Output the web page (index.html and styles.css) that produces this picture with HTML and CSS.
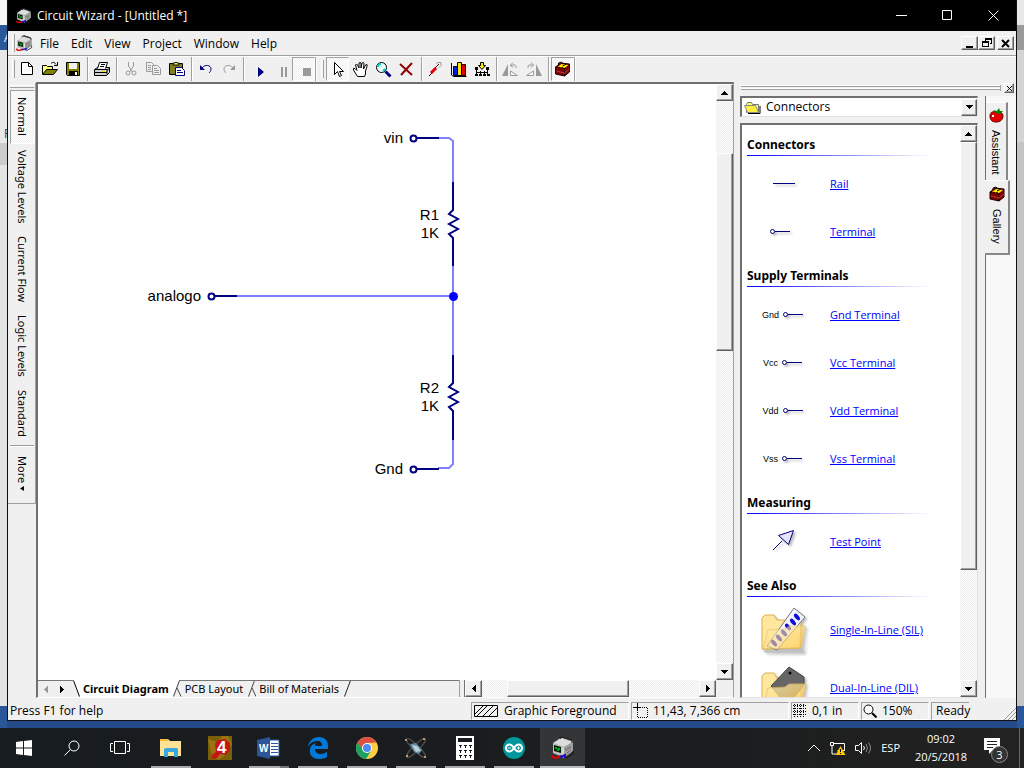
FILE: index.html
```html
<!DOCTYPE html>
<html lang="en">
<head>
    <meta charset="UTF-8">
    <meta name="viewport" content="width=device-width, initial-scale=1.0">
    <title>Circuit Wizard - [Untitled *]</title>
    <link rel="stylesheet" href="styles.css">
</head>
<body>
    <svg class="defs" aria-hidden="true">
        <symbol id="meter" viewBox="0 0 24 24">
            <path d="M2 8l7-6 4-1 9 4v10l-9 7-11-5z" fill="#8a8a8a"/>
            <path d="M2 7l8-5 12 4-9 5z" fill="#dcdcdc"/>
            <path d="M2 7l11 4v10L2 17z" fill="#c0c0c0"/>
            <path d="M13 11l9-5v9l-9 6z" fill="#a0a0a0"/>
            <path d="M9 3l2-2 10 3v3M8 2l3-1 9 3" fill="none" stroke="#222"/>
            <path d="M3 9l7 2v6l-7-2z" fill="#001a00"/>
            <path d="M4 13l1-2 2 4 1-3 1 2" fill="none" stroke="#00d030"/>
            <path d="M12 12v7" stroke="#eee"/>
            <path d="M15 12v3M17 11v3M19 10v3M16 17l4-3" stroke="#666"/>
            <path d="M1 19c0 4 5 3 9 1" fill="none" stroke="#e00000" stroke-width="2"/>
            <path d="M9 21l5-2v3" fill="none" stroke="#1010d0" stroke-width="2"/>
            <path d="M15 22l7-4v-3" fill="none" stroke="#111"/>
        </symbol>
        <symbol id="toolbox" viewBox="0 0 16 16">
            <path d="M1 6l5-4 9 1v8l-5 4-9-2z" fill="#800000" stroke="#200000"/>
            <path d="M3 6l4-3 7 1-4 3z" fill="#ffee00"/>
            <path d="M4 4V2l3-1 2 2M8 5l4-2" fill="none" stroke="#000"/>
            <path d="M1 6l9 1v8" fill="none" stroke="#000" stroke-dasharray="2 1"/>
            <path d="M2 10l8 2 5-4" fill="none" stroke="#b04040"/>
        </symbol>
        <symbol id="term" viewBox="0 0 22 8">
            <path d="M5 3.500h15" stroke="#000080"/>
            <circle cx="2.500" cy="3.500" r="2" fill="#fff" stroke="#000080"/>
        </symbol>
        <symbol id="up" viewBox="0 0 7 4"><path d="M3 0h1v1h1v1h1v1h1v1H0V3h1V2h1V1h1z"/></symbol>
        <symbol id="down" viewBox="0 0 7 4"><path d="M0 0h7v1H6v1H5v1H4v1H3V3H2V2H1V1H0z"/></symbol>
        <symbol id="left" viewBox="0 0 4 7"><path d="M0 3h1V2h1V1h1V0h1v7H3V6H2V5H1V4H0z"/></symbol>
        <symbol id="right" viewBox="0 0 4 7"><path d="M4 3H3V2H2V1H1V0H0v7h1V6h1V5h1V4h1z"/></symbol>
    </svg>

    <div class="desktop">
        <div class="side side-left"><span class="side-a">A</span><span class="side-f">F</span></div>
        <div class="window">
            <header class="titlebar">
                <svg width="16" height="16"><use href="#meter"/></svg>
                <h1>Circuit Wizard - [Untitled *]</h1>
                <div class="caption">
                    <button aria-label="Minimize"><svg width="11" height="11"><path d="M0 5.500h11" stroke="#fff"/></svg></button>
                    <button aria-label="Maximize"><svg width="11" height="11"><path d="M.5.5h9v9h-9z" fill="none" stroke="#fff"/></svg></button>
                    <button aria-label="Close"><svg width="11" height="11"><path d="M.5.5l10 10M10.500.5l-10 10" stroke="#fff"/></svg></button>
                </div>
            </header>

            <nav class="menubar">
                <span class="grip"></span>
                <svg width="17" height="17"><use href="#meter"/></svg>
                <button>File</button>
                <button>Edit</button>
                <button>View</button>
                <button>Project</button>
                <button>Window</button>
                <button>Help</button>
                <div class="mdi">
                    <button aria-label="Minimize document" class="raised"><svg width="10" height="9"><path d="M1 7h7v2H1z"/></svg></button>
                    <button aria-label="Restore document" class="raised"><svg width="10" height="10" class="crisp"><path d="M3 0h7v6H8V5h1V2H4v1H3zM0 3h7v6H0zM1 5v3h5V5z" fill-rule="evenodd"/></svg></button>
                    <button aria-label="Close document" class="raised mdi-close"><svg width="10" height="9"><path d="M1 1l7 7M8 1L1 8" stroke="#000" stroke-width="2"/></svg></button>
                </div>
            </nav>

            <div class="toolbar">
                <span class="grip"></span>
                <button aria-label="New"><svg width="16" height="16"><path d="M2.500 1.500h7l4 4v8h-11z" fill="#fff" stroke="#000"/><path d="M9.500 1.500v4h4" fill="none" stroke="#000"/></svg></button>
                <button aria-label="Open"><svg width="18" height="16"><path d="M1.500 13V4.500h4l1 1h5V8" fill="#ffff80" stroke="#000"/><path d="M1.500 13.500l4-5h11l-4 5z" fill="#808000" stroke="#000"/><path d="M10 2.500c2-2 4-1 5 1M16.500 1v3.500H13" fill="none" stroke="#000"/></svg></button>
                <button aria-label="Save"><svg width="16" height="16"><path d="M1.500 1.500h13v13h-12l-1-1z" fill="#808000" stroke="#000"/><path d="M4 2h8v6H4z" fill="#f0f0f0"/><path d="M4 10h9v4H4z"/><path d="M10 11h2v3h-2z" fill="#fff"/></svg></button>
                <span class="sep"></span>
                <button aria-label="Print"><svg width="18" height="16"><path d="M1.500 8.500l3-2h12v5l-3 3h-12z" fill="#d0d0d0" stroke="#000"/><path d="M4.500 7.500l2-6h8l-2 6" fill="#fff" stroke="#000"/><path d="M8 3.500h4M7 5.500h4" stroke="#000"/><path d="M2 8.500h12v5M14 9l3-2M2 11.500h12" fill="none" stroke="#000"/><path d="M9 10.500h3" stroke="#f5e000"/></svg></button>
                <span class="sep"></span>
                <button aria-label="Cut"><svg width="16" height="16" fill="none" stroke="#999"><path d="M5.500 1v4l4 6M10.500 1v4l-4 6"/><circle cx="5" cy="12" r="2"/><circle cx="11" cy="12" r="2"/></svg></button>
                <button aria-label="Copy"><svg width="17" height="16" fill="#f0f0f0" stroke="#999"><path d="M1.500 1.500h5l3 3v6h-8z"/><path d="M7.500 4.500h5l3 3v6h-8z"/><path d="M3 4.500h3M3 6.500h3M3 8.500h3M9 7.500h3M9 9.500h5M9 11.500h5"/></svg></button>
                <button aria-label="Paste"><svg width="17" height="16"><path d="M1.500 2.500h13v11h-13z" fill="#808020" stroke="#000"/><path d="M5 4V2h2l1-1 1 1h2v2z" fill="#ffff70" stroke="#000"/><path d="M7.500 6.500h6l3 3v5h-9z" fill="#fff" stroke="#000080"/><path d="M9 9.500h4M9 11.500h6" stroke="#000080"/></svg></button>
                <span class="sep"></span>
                <button aria-label="Undo"><svg width="14" height="12"><path d="M1 2v5h5z" fill="#000080"/><path d="M3 5c3-4 9-3 9 1 0 2-1 3-2 4" fill="none" stroke="#000080"/></svg></button>
                <button aria-label="Redo"><svg width="14" height="12"><path d="M13 2v5H8z" fill="#999"/><path d="M11 5C8 1 2 2 2 6c0 2 1 3 2 4" fill="none" stroke="#999"/></svg></button>
                <span class="sep"></span>
                <button aria-label="Run" class="run"><svg width="6" height="10"><path d="M0 0l6 5-6 5z" fill="#000080"/></svg></button>
                <button aria-label="Pause" class="run"><svg width="6" height="10"><path d="M0 0h2v10H0zM4 0h2v10H4z" fill="#999"/></svg></button>
                <button aria-label="Stop" class="run pressed"><svg width="8" height="8"><path d="M0 0h8v8H0z" fill="#999"/></svg></button>
                <span class="band-end"></span>
                <span class="grip"></span>
                <button aria-label="Select" class="pressed"><svg width="14" height="17"><path d="M3.500 1.500v12l3-3 2 5 2-1-2-4h4z" fill="#fff" stroke="#000"/></svg></button>
                <button aria-label="Pan"><svg width="18" height="17"><path d="M5.500 15.500L1.500 9V7.500h1.500l2 2L3.500 4l1-1 1 1L7 7V2l1-.5 1 .5v5l1-5 1.500-.5.5 1L11.500 8l2-4 1.500-.5v2L13.500 10v3l-1 2.500z" fill="#fff" stroke="#000"/></svg></button>
                <button aria-label="Zoom"><svg width="17" height="17"><circle cx="6.500" cy="6.500" r="5" fill="#e8ffff" stroke="#000"/><path d="M3 6c0-2 1-3 3-3M8 10l2-2" stroke="#00d0d0" stroke-width="2" fill="none"/><path d="M10.500 10.500l5 5" stroke="#000080" stroke-width="3"/></svg></button>
                <button aria-label="Delete"><svg width="15" height="15"><path d="M1 2l12 11M13 1L2 13" stroke="#900000" stroke-width="2" fill="none"/></svg></button>
                <span class="sep"></span>
                <button aria-label="Probe"><svg width="15" height="16"><path d="M1 15l3-3" stroke="#000"/><path d="M3 12l5-5" stroke="#e00000" stroke-width="3"/><path d="M7 7l4-4" stroke="#500000"/><path d="M8 2.500l2-1h3v3l-2 2" fill="none" stroke="#999"/></svg></button>
                <button aria-label="Graph"><svg width="18" height="17"><path d="M1.500 2v12l2 1.500h13" fill="none" stroke="#000"/><path d="M3.500 5.500h4v9h-4z" fill="#0020e0" stroke="#000"/><path d="M7.500 1.500h4v13h-4z" fill="#ffe800" stroke="#000"/><path d="M11.500 3.500h4v11h-4z" fill="#e00000" stroke="#000"/></svg></button>
                <button aria-label="Convert to PCB"><svg width="16" height="17"><path d="M6.500 1.500h3v3h2l-3.500 4-3.500-4h2z" fill="#ffe800" stroke="#000"/><path d="M2.500 7v8M13.500 7v8M6.500 10v5M10.500 10v5M2 11.500h12" stroke="#000"/><path d="M1 6h3v3H1zM12 6h3v3h-3zM1 13h3v2H1zM5 13h3v2H5zM9 13h3v2H9zM13 13h3v2h-3z"/></svg></button>
                <span class="sep"></span>
                <button aria-label="Rotate left"><svg width="17" height="15"><path d="M6 2v12H0z" fill="#999"/><path d="M8.500 9v4.500h7z" fill="#fff" stroke="#999"/><path d="M9 4.500V3h3c2 0 2 1 2 3M11 .5L8.500 3 11 5.500" fill="none" stroke="#999"/></svg></button>
                <button aria-label="Rotate right"><svg width="17" height="15"><path d="M11 2v12h6z" fill="#999"/><path d="M8.500 9v4.500h-7z" fill="#fff" stroke="#999"/><path d="M3 6c0-2 0-3 2-3h3M6 .5L8.500 3 6 5.500" fill="none" stroke="#999"/></svg></button>
                <span class="sep"></span>
                <button aria-label="Gallery" class="pressed"><svg width="17" height="16"><use href="#toolbox"/></svg></button>
                <span class="band-end"></span>
            </div>

            <main class="workspace">
                <div class="modes">
                    <span class="grip-h"></span>
                    <button class="pressed">Normal</button>
                    <button>Voltage Levels</button>
                    <button>Current Flow</button>
                    <button>Logic Levels</button>
                    <button>Standard</button>
                    <span class="modes-sep"></span>
                    <button>More <svg width="4" height="5"><path d="M4 0v5L0 2.500z"/></svg></button>
                </div>

                <section class="editor">
                    <div class="sheet">
                        <svg class="circuit" role="img" aria-label="Voltage divider circuit">
                            <g fill="none" stroke="#8080ff" stroke-width="2">
                                <path d="M400 54h11l4 3v42M415 182v90M415 356v24l-4 4h-11M198 212h217"/>
                            </g>
                            <g fill="none" stroke="#000080" stroke-width="2">
                                <path d="M378 54h23M176 212h23M378 385h23"/>
                                <path d="M415 98v28l-4 4 9 5-9 5 9 5-9 5 4 4v28"/>
                                <path d="M415 271v28l-4 4 9 5-9 5 9 5-9 5 4 4v29"/>
                            </g>
                            <g fill="#fff" stroke="#000080" stroke-width="2">
                                <circle cx="375.500" cy="54.500" r="3"/>
                                <circle cx="173.500" cy="212.500" r="3"/>
                                <circle cx="375.500" cy="385.500" r="3"/>
                            </g>
                            <circle cx="415.500" cy="212.500" r="4.500" fill="#0000ff"/>
                            <g text-anchor="end">
                                <text x="365" y="59">vin</text>
                                <text x="163" y="217">analogo</text>
                                <text x="365" y="390">Gnd</text>
                                <text x="401" y="136">R1</text>
                                <text x="401" y="154">1K</text>
                                <text x="401" y="309">R2</text>
                                <text x="401" y="327">1K</text>
                            </g>
                        </svg>
                        <div class="vscroll">
                            <button class="raised" aria-label="Scroll up"><svg width="7" height="4"><use href="#up"/></svg></button>
                            <span class="track track-52"></span>
                            <span class="thumb thumb-197"></span>
                            <span class="track track-314"></span>
                            <button class="raised" aria-label="Scroll down"><svg width="7" height="4"><use href="#down"/></svg></button>
                        </div>
                    </div>
                    <div class="sheet-bar">
                        <div class="tabs">
                            <button class="tab-nav" aria-label="Previous tab"><svg width="4" height="7" fill="#999"><use href="#left"/></svg></button>
                            <button class="tab-nav" aria-label="Next tab"><svg width="4" height="7"><use href="#right"/></svg></button>
                            <svg width="10" height="17"><path d="M4 0l6 17V0z" fill="#fff"/><path d="M3.500.5L9.500 16.500" stroke="#000"/><path d="M0 .5h4" stroke="#777"/></svg>
                            <button class="tab active">Circuit Diagram</button>
                            <svg width="10" height="17"><path d="M0 0h7L1 17H0z" fill="#fff"/><path d="M7.500.5L1.500 16.500M5 8l4 8.500" stroke="#444"/><path d="M7 .5h3" stroke="#777"/></svg>
                            <button class="tab">PCB Layout</button>
                            <svg width="10" height="17"><path d="M8.500.5L2.500 16.500M6 8l4 8.500" stroke="#444"/><path d="M0 .5h10" stroke="#777"/></svg>
                            <button class="tab">Bill of Materials</button>
                            <svg width="10" height="17"><path d="M8.500.5L2.500 16.500" stroke="#222"/><path d="M0 .5h10" stroke="#777"/></svg>
                            <span class="tabs-rest"></span>
                        </div>
                        <div class="hscroll">
                            <button class="raised" aria-label="Scroll left"><svg width="4" height="7"><use href="#left"/></svg></button>
                            <span class="track track-25"></span>
                            <span class="thumb thumb-121"></span>
                            <span class="track track-71"></span>
                            <button class="raised" aria-label="Scroll right"><svg width="4" height="7"><use href="#right"/></svg></button>
                        </div>
                        <span class="corner"></span>
                    </div>
                </section>

                <aside class="dock">
                    <div class="dock-title">
                        <span class="dock-grip"></span>
                        <button class="raised" aria-label="Close gallery"><svg width="7" height="7"><path d="M1 1l5 5M6 1L1 6" stroke="#000"/></svg></button>
                    </div>
                    <div class="dock-body">
                        <div class="gallery">
                            <div class="combo">
                                <svg width="17" height="14"><path d="M2.500 12.500h12v-8h-6l-1-2h-4l-1 2z" fill="#ffff70" stroke="#777"/><path d="M.5 5.500h11l3 7h-11z" fill="#fff040" stroke="#888"/><path d="M4 13.500h12V6" fill="none" stroke="#000"/></svg>
                                <select aria-label="Gallery group"><option>Connectors</option></select>
                                <span class="raised combo-arrow"><svg width="7" height="4"><use href="#down"/></svg></span>
                            </div>
                            <div class="listing">
                                <div class="groups">
                                    <h2>Connectors</h2>
                                    <div class="part"><span class="pic"><svg width="22" height="8"><path d="M0 3.500h22" stroke="#000080"/></svg></span><a href="#">Rail</a></div>
                                    <div class="part"><span class="pic pic-term"><svg width="22" height="8"><use href="#term"/></svg></span><a href="#">Terminal</a></div>
                                    <h2>Supply Terminals</h2>
                                    <div class="part"><span class="pic"><b>Gnd</b><svg width="22" height="8"><use href="#term"/></svg></span><a href="#">Gnd Terminal</a></div>
                                    <div class="part"><span class="pic"><b>Vcc</b><svg width="22" height="8"><use href="#term"/></svg></span><a href="#">Vcc Terminal</a></div>
                                    <div class="part"><span class="pic"><b>Vdd</b><svg width="22" height="8"><use href="#term"/></svg></span><a href="#">Vdd Terminal</a></div>
                                    <div class="part"><span class="pic"><b>Vss</b><svg width="22" height="8"><use href="#term"/></svg></span><a href="#">Vss Terminal</a></div>
                                    <h2>Measuring</h2>
                                    <div class="part"><span class="pic"><svg width="24" height="26"><path d="M1 21l9-9" stroke="#000080"/><path d="M6.500 6.500l15-5-5 14z" fill="#e4e4ff" stroke="#000080"/></svg></span><a href="#">Test Point</a></div>
                                    <h2>See Also</h2>
                                    <div class="part part-folder">
                                        <span class="pic"><svg width="48" height="48" viewBox="0 0 48 48">
                                            <defs>
                                                <linearGradient id="fold" x1="0" y1="0" x2="1" y2="1"><stop offset="0" stop-color="#fff3c0"/><stop offset="1" stop-color="#ffc445"/></linearGradient>
                                            </defs>
                                            <path d="M3 45l40-2 3-20-2 24H6z" fill="#bbb" opacity=".7"/>
                                            <path d="M2 43V12l3-3h9l3 5h22l2 2-1 26z" fill="#ffe7a0" stroke="#dcae50"/>
                                            <path d="M7 40L34 2l11 9-28 33z" fill="#f4f4ff" stroke="#777"/>
                                            <g fill="#1010d8"><ellipse cx="37" cy="11" rx="2" ry="4" transform="rotate(-40 37 11)"/><ellipse cx="33" cy="16" rx="2" ry="4" transform="rotate(-40 33 16)"/><ellipse cx="28" cy="21" rx="2" ry="4" transform="rotate(-40 28 21)"/><ellipse cx="24" cy="27" rx="2" ry="4" transform="rotate(-40 24 27)"/><ellipse cx="19" cy="32" rx="2" ry="4" transform="rotate(-40 19 32)"/><ellipse cx="14" cy="37" rx="2" ry="4" transform="rotate(-40 14 37)"/></g>
                                            <path d="M3 43l5-19 17-1 4-3h17l-5 22z" fill="url(#fold)" stroke="#e5bd60" opacity=".6"/>
                                        </svg></span><a href="#">Single-In-Line (SIL)</a>
                                    </div>
                                    <div class="part part-folder">
                                        <span class="pic"><svg width="48" height="48" viewBox="0 0 48 48">
                                            <path d="M3 45l40-2 3-20-2 24H6z" fill="#bbb" opacity=".7"/>
                                            <path d="M2 43V12l3-3h9l3 5h22l2 2-1 26z" fill="#ffe7a0" stroke="#dcae50"/>
                                            <path d="M11 22L29 3l15 10v8L27 42z" fill="#666" stroke="#444"/>
                                            <circle cx="30" cy="9" r="1.500"/>
                                            <path d="M3 43l5-19 17-1 4-3h17l-5 22z" fill="url(#fold)" stroke="#e5bd60" opacity=".75"/>
                                        </svg></span><a href="#">Dual-In-Line (DIL)</a>
                                    </div>
                                </div>
                                <div class="vscroll">
                                    <button class="raised" aria-label="Scroll gallery up"><svg width="7" height="4"><use href="#up"/></svg></button>
                                    <span class="thumb thumb-428"></span>
                                    <span class="track track-111"></span>
                                    <button class="raised" aria-label="Scroll gallery down"><svg width="7" height="4"><use href="#down"/></svg></button>
                                </div>
                            </div>
                        </div>
                        <div class="dock-tabs">
                            <button class="dock-tab"><svg width="15" height="15"><path d="M1 8c0-4 3-5 6-4 4-1 7 1 7 4 0 4-3 6-7 6s-6-2-6-6z" fill="#e00000" stroke="#700000"/><path d="M7 5L4 2l4 1 2-3 1 3h3l-3 3z" fill="#008000"/><path d="M3 7h2v2H3z" fill="#fff"/></svg>Assistant</button>
                            <button class="dock-tab current"><svg width="16" height="16"><use href="#toolbox"/></svg>Gallery</button>
                        </div>
                    </div>
                </aside>
            </main>

            <footer class="statusbar">
                <span class="hint">Press F1 for help</span>
                <span class="pane pane-wide pane-layer"><svg width="24" height="12"><path d="M.5.5h23v11H.5zM1 9l8-8M3 11L13 1M9 11L19 1M15 11l8-8" fill="none" stroke="#000"/></svg>Graphic Foreground</span>
                <span class="pane pane-wide pane-pos"><svg width="16" height="16" class="crisp"><path d="M4.500 0v8M0 4.500h8" stroke="#000"/><path d="M5 4.500h10M5 14.500h10M4.500 5v10M14.500 5v10" stroke="#000" stroke-dasharray="1 1"/></svg>11,43, 7,366 cm</span>
                <span class="pane"><svg width="14" height="14" class="crisp"><path d="M1.500 0v14M4.500 0v14M7.500 0v14M10.500 0v14M0 1.500h14M0 4.500h14M0 7.500h14M0 10.500h14" stroke="#000" stroke-dasharray="1 1"/></svg>0,1 in</span>
                <span class="pane"><svg width="14" height="14"><circle cx="5.500" cy="5.500" r="4.500" fill="#fff" stroke="#000"/><path d="M9 9l4.500 4.500" stroke="#000" stroke-width="2"/></svg>150%</span>
                <span class="pane pane-ready">Ready</span>
                <svg class="size-grip" width="12" height="12" stroke="#999"><path d="M0 12L12 0M4 12l8-8M8 12l4-4"/></svg>
            </footer>
        </div>
        <div class="side side-right"></div>
    </div>

    <nav class="taskbar">
        <button class="task plain" aria-label="Start"><svg width="16" height="16" fill="#fff"><path d="M0 2l7-1v6.500H0zM8 1l8-1v7.500H8zM0 8.500h7V15l-7-1zM8 8.500h8V16l-8-1z"/></svg></button>
        <button class="task plain" aria-label="Search"><svg width="16" height="16" fill="none" stroke="#fff"><circle cx="10" cy="6" r="5"/><path d="M6.500 9.500L.5 15.500"/></svg></button>
        <button class="task plain" aria-label="Task View"><svg width="20" height="16" fill="none" stroke="#fff"><path d="M4.500 1.500h11v12h-11zM3 3.500H.5v8H3M17 3.500h2.500v8H17"/></svg></button>
        <button class="task running" aria-label="File Explorer"><svg width="22" height="20"><path d="M0 2l1-1h7l2 2h11v15H0z" fill="#ffe394"/><path d="M0 1h8v2H0z" fill="#f5bd35"/><path d="M4 18v-7l2-1h11l1 1v8h-4v-5H8v5H4z" fill="#38a9e0"/></svg></button>
        <button class="task" aria-label="Left 4 Dead"><svg width="24" height="24"><path d="M0 0h24v24H0z" fill="#7a5e08"/><path d="M0 3l9 3 5-6h6l4 8-6 11-8 5-7-7z" fill="#9a7410"/><path d="M7 8l3-4 7-1 5 4v7l-4 5-6-1-3 4-6 1 2-5 3-2z" fill="#c81414"/><text class="four" x="9" y="17">4</text></svg></button>
        <button class="task running split" aria-label="Word"><svg width="23" height="22"><path d="M12 3h10v16H12z" fill="#fff" stroke="#2b579a"/><path d="M14 6.500h7M14 9.500h7M14 12.500h7M14 15.500h7" stroke="#2b579a"/><path d="M0 3l13-3v22L0 19z" fill="#2b579a"/><text class="word" x="2" y="15">W</text></svg></button>
        <button class="task running" aria-label="Edge"><svg width="22" height="22"><path d="M1 10C2 4 6 0 12 0c6 0 9 4 9 9v3H8c0 4 3 5 6 5 2 0 4-1 6-2v5c-2 1-4 2-8 2-7 0-10-5-9-9 0-4 3-6 6-7-1 1-1 2-1 3h7c0-3-1-5-5-5-4 0-7 2-9 6z" fill="#0078d7"/></svg></button>
        <button class="task running" aria-label="Chrome"><svg width="22" height="22"><circle cx="11" cy="11" r="11" fill="#ffce44"/><path d="M1.500 5.500A11 11 0 0 1 20.500 5.500L11 6 6 12z" fill="#dd4f43"/><path d="M1.500 5.500A11 11 0 0 0 10 22l5-8-8-1z" fill="#1aa260"/><circle cx="11" cy="11" r="5" fill="#fff"/><circle cx="11" cy="11" r="4" fill="#4c8bf5"/></svg></button>
        <button class="task running" aria-label="Proteus"><svg width="24" height="24"><g fill="none" stroke="#555"><ellipse cx="12" cy="12" rx="13" ry="3" transform="rotate(45 12 12)"/><ellipse cx="12" cy="12" rx="13" ry="3" transform="rotate(-45 12 12)"/></g><path d="M6 8l6-1 6 7-3 4-5-2z" fill="#6689a6"/><path d="M8 9l5 1 4 5-5 1z" fill="#b8d0dd"/><path d="M1 3h2v2H1zM19 2h2v2h-2zM2 19h2v2H2zM20 20h2v2h-2z" fill="#c49a60"/></svg></button>
        <button class="task running" aria-label="Calculator"><svg width="18" height="24"><path d="M0 0h18v24H0z" fill="#fff"/><path d="M2 2h14v4H2zM3 9h3v1H5v2H4v-2H3zM8 9h3v1h-1v2H9v-2H8zM13 9h3v1h-1v2h-1v-2h-1zM3 14h3v1H5v2H4v-2H3zM8 14h3v1h-1v2H9v-2H8zM13 14h3v1h-1v2h-1v-2h-1zM3 19h3v1H5v2H4v-2H3zM8 19h3v1h-1v2H9v-2H8zM13 19h3v1h-1v2h-1v-2h-1z" fill="#191c1e"/></svg></button>
        <button class="task running" aria-label="Arduino"><svg width="22" height="22"><circle cx="11" cy="11" r="11" fill="#00979c"/><path d="M11 11C9 8 8 7.500 6.500 7.500a3.500 3.500 0 0 0 0 7C8 14.500 9 14 11 11s3-3.500 4.500-3.500a3.500 3.500 0 0 1 0 7C14 14.500 13 14 11 11z" fill="none" stroke="#fff" stroke-width="2"/><path d="M5 11h3M14 11h3M15.500 9.500v3" stroke="#fff"/></svg></button>
        <button class="task running focused" aria-label="Circuit Wizard"><svg width="24" height="24"><use href="#meter"/></svg></button>
        <div class="tray">
            <button aria-label="Show hidden icons"><svg width="12" height="8"><path d="M0 7l6-6 6 6" fill="none" stroke="#fff"/></svg></button>
            <button aria-label="Network"><svg width="17" height="15"><path d="M4.500 2.500h11v7h-7M1.500 1.500h3v3h-3zM3 5v8h4" fill="none" stroke="#fff"/><path d="M11.500 5l5 9h-10z" fill="#ffc400"/><path d="M11.500 8v3M11.500 12v1" stroke="#000"/></svg></button>
            <button aria-label="Volume"><svg width="17" height="14" fill="none"><path d="M.5 4.500h3l3-3v11l-3-3h-3z" stroke="#fff"/><path d="M8.500 5q2 2 0 4" stroke="#fff"/><path d="M11 3q3 4 0 8M13.500 1.500q4 5.500 0 11" stroke="#888"/></svg></button>
            <button>ESP</button>
            <button class="clock"><span>09:02</span><span>20/5/2018</span></button>
            <button class="notes" aria-label="Notifications"><svg width="16" height="16"><path d="M0 0h16v12H9l-4 4v-4H0z" fill="#fff"/><path d="M3 3.500h10M3 6.500h10M3 9.500h6" stroke="#222"/></svg><span class="badge">3</span></button>
            <span class="show-desktop"></span>
        </div>
    </nav>
</body>
</html>
```

FILE: styles.css
```css
* {
    box-sizing: border-box;
}
body {
    margin: 0;
    height: 100vh;
    display: flex;
    flex-direction: column;
    overflow: hidden;
    font-family: "Open Sans", "Noto Sans", sans-serif;
    font-size: 12px;
    line-height: 16px;
    color: #000;
}
button {
    font: inherit;
    color: inherit;
    background: none;
    border: 0;
    padding: 0;
    white-space: nowrap;
}
svg {
    flex: none;
    display: block;
}
.defs {
    position: absolute;
    width: 0;
    height: 0;
}
.crisp {
    shape-rendering: crispEdges;
}

/* window behind */
.desktop {
    flex: 1;
    min-height: 0;
    display: flex;
    padding-bottom: 7px;
    background: #244a87;
}
.side {
    width: 7px;
    margin-bottom: -7px;
    overflow: hidden;
}
.side-left {
    display: flex;
    flex-direction: column;
    background: linear-gradient(#f4f4f4 25px, #2a579a 25px 50px, #e8e8e8 50px 143px, #ccc 143px 165px, #e4e4e4 165px 706px, #2a579a 706px);
}
.side-right {
    background: linear-gradient(#e8e8e8 25px, #999 25px 50px, #d4d4d4 50px 142px, #c4c4c4 142px 706px, #2a579a 706px);
}
.side-a {
    padding: 30px 0 0 4px;
    color: #fff;
}
.side-f {
    padding: 80px 0 0 4px;
    color: #444;
}
.window {
    flex: 1;
    min-width: 0;
    display: flex;
    flex-direction: column;
    border: 1px solid #101010;
    border-top: 0;
    background: #f0f0f0;
}

.titlebar {
    height: 31px;
    display: flex;
    align-items: center;
    gap: 5px;
    padding-left: 8px;
    background: #000;
    color: #fff;
}
.titlebar h1 {
    margin: 0;
    font-size: 12px;
    font-weight: normal;
}
.caption {
    margin-left: auto;
    display: flex;
}
.caption button {
    width: 46px;
    height: 31px;
    display: grid;
    place-items: center;
}

.raised {
    display: grid;
    place-items: center;
    background: #f0f0f0;
    border: 1px solid #fff;
    border-right-color: #606060;
    border-bottom-color: #606060;
    box-shadow: inset -1px -1px #a0a0a0;
}
.grip {
    width: 3px;
    margin: 3px 4px 3px 4px;
    border-left: 1px solid #fff;
    border-right: 1px solid #a0a0a0;
}
.menubar {
    height: 25px;
    display: flex;
    border-bottom: 1px solid #a0a0a0;
}
.menubar > svg {
    margin: 4px 1px 0 -3px;
}
.menubar > button {
    padding: 2px 6px 0;
}
.mdi {
    margin-left: auto;
    display: flex;
    align-items: center;
    padding-right: 2px;
}
.mdi button {
    width: 17px;
    height: 14px;
}
.mdi .mdi-close {
    margin-left: 2px;
}

.toolbar {
    height: 26px;
    display: flex;
    padding-bottom: 1px;
    border-top: 1px solid #fff;
}
.toolbar .grip {
    margin-right: 0;
}
.toolbar button {
    width: 23px;
    display: grid;
    place-items: center;
}
.sep {
    width: 6px;
    background: linear-gradient(90deg, transparent 3px, #a0a0a0 3px 4px, #fff 4px 5px, transparent 5px);
}
.toolbar .run {
    padding: 5px 0 0 7px;
}
.pressed {
    border: 1px solid #fff;
    border-top-color: #a0a0a0;
    border-left-color: #a0a0a0;
    background: repeating-conic-gradient(#fff 0 25%, #f0f0f0 0 50%) 0 0 / 2px 2px;
}
.band-end {
    width: 2px;
    border-left: 1px solid #a0a0a0;
    border-right: 1px solid #fff;
}
.band-end + .grip {
    margin-right: 2px;
}

.workspace {
    flex: 1;
    min-height: 0;
    display: flex;
}
.modes {
    width: 28px;
    align-self: flex-start;
    margin-top: 1px;
    padding: 2px 1px 5px 2px;
    display: flex;
    flex-direction: column;
    border-right: 1px solid #a0a0a0;
    border-bottom: 1px solid #a0a0a0;
    font-family: "Noto Sans", "Open Sans", sans-serif;
    font-size: 11px;
}
.grip-h {
    height: 3px;
    margin-bottom: 2px;
    border-top: 1px solid #fff;
    border-bottom: 1px solid #a0a0a0;
}
.modes button {
    writing-mode: vertical-rl;
    width: 25px;
    padding: 6px 0 7px;
    line-height: 23px;
    text-align: left;
}
.modes button svg {
    display: inline-block;
}
.modes-sep {
    height: 2px;
    margin: 1px 0 3px;
    border-top: 1px solid #a0a0a0;
    border-bottom: 1px solid #fff;
}

.editor {
    flex: 1;
    min-width: 0;
    display: flex;
    flex-direction: column;
    border: 2px solid #707070;
    border-right: 1px solid #a0a0a0;
    border-bottom: 1px solid #fff;
}
.sheet {
    flex: 1;
    min-height: 0;
    display: flex;
    background: #fff;
}
.circuit {
    flex: 1;
    min-width: 0;
    height: 100%;
    font: 15px "Liberation Sans", Arial, sans-serif;
}
.vscroll {
    width: 17px;
    display: flex;
    flex-direction: column;
}
.vscroll button {
    height: 17px;
}
.track {
    background: repeating-conic-gradient(#fff 0 25%, #ebebeb 0 50%) 0 0 / 2px 2px;
}
.thumb {
    background: #f0f0f0;
    border: 1px solid #fff;
    border-right-color: #606060;
    border-bottom-color: #606060;
    box-shadow: inset -1px -1px #a0a0a0;
}
.track-25 { flex: 25; }
.track-52 { flex: 52; }
.track-71 { flex: 71; }
.track-111 { flex: 111; }
.track-314 { flex: 314; }
.thumb-121 { flex: 121; }
.thumb-197 { flex: 197; }
.thumb-428 { flex: 428; }

.sheet-bar {
    height: 17px;
    display: flex;
}
.tabs {
    flex: 421;
    min-width: 0;
    display: flex;
    border-right: 1px solid #a0a0a0;
}
.tab-nav {
    width: 16px;
    border-top: 1px solid #777;
    display: grid;
    place-items: center;
}
.tab {
    padding: 0 3px;
    font: 11px/16px "Noto Sans", "Open Sans", sans-serif;
    border-top: 1px solid #777;
}
.tab.active {
    background: #fff;
    border-color: #fff;
    font-weight: bold;
}
.tabs-rest {
    flex: 1;
    border-top: 1px solid #777;
}
.hscroll {
    flex: 251;
    margin-left: 4px;
    border-left: 1px solid #707070;
    display: flex;
}
.hscroll button {
    width: 17px;
}
.corner {
    width: 17px;
}

.dock {
    width: 282px;
    display: flex;
    flex-direction: column;
    padding-left: 6px;
}
.dock-title {
    height: 14px;
    display: flex;
    gap: 3px;
    padding: 1px 2px 3px 1px;
}
.dock-grip {
    flex: 1;
    height: 6px;
    margin-top: 2px;
    border: 1px solid #a0a0a0;
    border-width: 0 1px 0 0;
    background: linear-gradient(#fff 1px, #a0a0a0 1px 2px, transparent 2px 3px, #fff 3px 4px, #a0a0a0 4px 5px, transparent 5px);
}
.dock-title button {
    width: 10px;
    height: 10px;
}
.dock-body {
    flex: 1;
    min-height: 0;
    display: flex;
    gap: 7px;
}
.gallery {
    flex: 1;
    display: flex;
    flex-direction: column;
    gap: 6px;
}
.combo {
    height: 21px;
    display: flex;
    align-items: center;
    padding-left: 2px;
    background: #fff;
    border: 2px solid #707070;
    border-right: 1px solid #e3e3e3;
    border-bottom: 1px solid #e3e3e3;
}
.combo select {
    flex: 1;
    appearance: none;
    border: 0;
    background: none;
    padding: 0 5px;
    font: inherit;
    color: #000;
}
.combo-arrow {
    width: 16px;
    height: 17px;
}
.listing {
    flex: 1;
    min-height: 0;
    display: flex;
    background: #fff;
    border: 2px solid #707070;
    border-right: 1px solid #e3e3e3;
    border-bottom: 1px solid #e3e3e3;
}
.groups {
    flex: 1;
    overflow: hidden;
    padding-left: 5px;
    font-size: 11px;
}
.groups h2 {
    width: 184px;
    height: 31px;
    margin: 0 0 4px;
    padding-top: 12px;
    font: bold 12px/16px "Noto Sans", "Open Sans", sans-serif;
    background: linear-gradient(90deg, #0000ff, #fff) bottom / 100% 1px no-repeat;
}
.part {
    height: 48px;
    display: grid;
    grid-template-columns: 73px 1fr;
    gap: 10px;
    align-items: center;
}
.part-folder {
    height: 58px;
}
.part a {
    color: #0000ff;
}
.pic {
    display: flex;
    align-items: center;
    justify-content: center;
    gap: 4px;
    font-family: "Liberation Sans", Arial, sans-serif;
}
.pic b {
    font-size: 9px;
    font-weight: normal;
}
.pic svg {
    filter: drop-shadow(2px 2px 1px #bbb);
}
.pic-term {
    justify-content: flex-start;
    padding-left: 23px;
}

.dock-tabs {
    width: 31px;
    display: flex;
    flex-direction: column;
    padding-top: 6px;
    border-left: 1px solid #707070;
    background: #f8f8f8;
}
.dock-tab {
    width: 22px;
    height: 78px;
    display: flex;
    align-items: center;
    gap: 7px;
    padding-top: 5px;
    writing-mode: vertical-rl;
    font: 11px/14px "Liberation Sans", Arial, sans-serif;
    background: #f0f0f0;
    border-top: 1px solid #fff;
    border-right: 2px solid #888;
}
.dock-tab.current {
    width: 25px;
    height: 75px;
    margin-left: -1px;
    border-bottom: 2px solid #888;
}

.statusbar {
    height: 22px;
    display: flex;
    gap: 2px;
    padding: 4px 0 0 2px;
}
.hint {
    flex: 1;
    padding-top: 1px;
}
.pane {
    width: 68px;
    height: 18px;
    display: flex;
    align-items: center;
    gap: 5px;
    padding-left: 1px;
    border: 1px solid #fff;
    border-top-color: #a0a0a0;
    border-left-color: #a0a0a0;
    white-space: nowrap;
}
.pane-wide {
    width: 158px;
}
.pane-layer {
    padding-left: 2px;
    gap: 6px;
}
.pane-pos {
    gap: 4px;
}
.pane-ready {
    width: 38px;
    padding-left: 4px;
    border-right: 0;
}
.size-grip {
    align-self: flex-end;
    margin-left: 33px;
}

.taskbar {
    height: 40px;
    display: flex;
    background: linear-gradient(90deg, #171c20, #1c1d1e 70%, #222);
    color: #fff;
}
.task {
    width: 45px;
    margin: 0 2px;
    display: grid;
    place-items: center;
}
.task.plain {
    width: 48px;
    margin: 0;
}
.task.plain + .task:not(.plain) {
    margin-left: 4px;
}
.running {
    background: linear-gradient(#aaa, #aaa) bottom / 40px 2px no-repeat;
}
.split {
    background: linear-gradient(90deg, #aaa 31px, #777 31px) bottom / 40px 2px no-repeat;
}
.focused {
    background: linear-gradient(#bbb, #bbb) bottom / 100% 2px no-repeat #343537;
}
.four {
    font: bold 17px "Liberation Sans", Arial, sans-serif;
    fill: #fff;
}
.word {
    font: bold 10px "Liberation Sans", Arial, sans-serif;
    fill: #fff;
}
.tray {
    margin-left: auto;
    display: flex;
    align-items: center;
    gap: 9px;
    font-size: 11px;
}
.tray > button {
    display: grid;
    place-items: center;
}
.tray .clock {
    width: 56px;
    margin-left: 4px;
    line-height: 18px;
}
.tray .notes {
    position: relative;
    width: 24px;
    height: 24px;
    margin: 0 5px 0 6px;
    padding-top: 2px;
    place-items: start;
}
.badge {
    position: absolute;
    left: 7px;
    top: 10px;
    width: 17px;
    height: 17px;
    border: 1px solid #888;
    border-radius: 50%;
    background: #333;
    font-size: 11px;
    line-height: 15px;
    text-align: center;
}
.show-desktop {
    align-self: stretch;
    width: 5px;
    margin-left: -3px;
    border-left: 1px solid #666;
}
```
